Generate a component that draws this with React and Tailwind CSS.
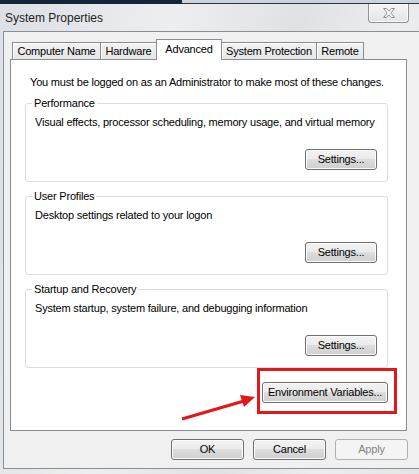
import React from "react";

const btn =
  "h-[21px] rounded-[3px] border border-[#707070] bg-[linear-gradient(#f2f2f2_0%,#ebebeb_50%,#dddddd_50%,#cfcfcf_100%)] shadow-[inset_0_0_0_1px_#fcfcfc] text-black flex items-center justify-center";

function Button({ children, className = "", disabled }) {
  if (disabled)
    return (
      <div className={`h-[21px] rounded-[3px] border border-[#adb2b5] bg-[#f4f4f4] text-[#838383] flex items-center justify-center ${className}`}>
        {children}
      </div>
    );
  return <div className={`${btn} ${className}`}>{children}</div>;
}

function Group({ title, text, mt = "" }) {
  return (
    <fieldset className={`ml-[14px] w-[363px] h-[86px] border border-[#d5dfe5] rounded-[3px] shadow-[inset_1px_1px_0_#fff] ${mt}`}>
      <legend className="ml-[6px] px-[2px] leading-[14px]">{title}</legend>
      <div className="pl-[9px] pt-[5px] leading-[14px]">{text}</div>
      <div className="flex justify-end pr-[10px] pt-[20px]">
        <Button className="w-[72px]">Settings...</Button>
      </div>
    </fieldset>
  );
}

const tabs = [
  { label: "Computer Name", w: "w-[89px]" },
  { label: "Hardware", w: "w-[57px]" },
  { label: "Advanced", w: "w-[66px]", active: true },
  { label: "System Protection", w: "w-[96px]" },
  { label: "Remote", w: "w-[48px]" },
];

export default function App() {
  return (
    <div className="relative w-[419px] h-[474px] overflow-hidden bg-[linear-gradient(100deg,#dcdfe3_0%,#eceef0_35%,#dfe2e5_60%,#ebedef_80%,#e2e4e7_100%)] font-['Liberation_Sans',Arial,sans-serif] text-[11px] tracking-[-0.2px] text-black">
      {/* desktop behind the window */}
      <div className="flex h-[4px]">
        <div className="w-[182px] bg-[#14253a]" />
        <div className="flex-1 bg-[#cdd3da] border-b border-[#2a3440]" />
      </div>

      {/* title bar */}
      <div className="flex h-[27px]">
        <div className="flex-1 pl-[5px] pt-[7px] text-[12px] tracking-normal text-[#1e1e1e] leading-[14px]">System Properties</div>
        <div className="mr-[10px] w-[41px] h-[19px] rounded-b-[4px] border border-t-0 border-[#8d9298] bg-[linear-gradient(#f4f5f6,#e2e5e8)] shadow-[inset_0_0_0_1px_#fafafa] flex items-center justify-center">
          <svg width="12" height="10" viewBox="0 0 12 10">
            <path
              d="M0.5 0.5 H3.5 L6 3.2 L8.5 0.5 H11.5 L7.8 5 L11.5 9.5 H8.5 L6 6.8 L3.5 9.5 H0.5 L4.2 5 Z"
              fill="#fdfdfd"
              stroke="#8c8f93"
              strokeWidth="1"
            />
          </svg>
        </div>
      </div>

      {/* client area */}
      <div className="ml-[3px] w-[430px] h-[438px] bg-[#f0f0f0] border border-[#8a8d92]">
        <div className="pl-[6px] pt-[7px]">
          {/* tabs */}
          <div className="relative z-10 flex items-end h-[20px] pl-[2px]">
            {tabs.map((t, i) =>
              t.active ? (
                <div
                  key={t.label}
                  className={`relative z-10 -ml-px -mb-px ${t.w} h-[21px] border border-b-0 border-[#898c95] bg-white flex justify-center pt-[2px] leading-[14px]`}
                >
                  {t.label}
                </div>
              ) : (
                <div
                  key={t.label}
                  className={`${i ? "-ml-px" : ""} ${t.w} h-[17px] border border-b-0 border-[#898c95] bg-[linear-gradient(#f3f3f3,#e6e6e6)] shadow-[inset_1px_1px_0_#fff] flex items-center justify-center leading-[14px]`}
                >
                  {t.label}
                </div>
              )
            )}
          </div>

          {/* tab panel */}
          <div className="w-[397px] h-[372px] bg-white border border-[#898c95]">
            <div className="pl-[19px] pt-[15px] leading-[14px]">
              You must be logged on as an Administrator to make most of these changes.
            </div>
            <div className="mt-[7px] flex flex-col gap-[7px]">
              <Group title="Performance" text="Visual effects, processor scheduling, memory usage, and virtual memory" />
              <Group title="User Profiles" text="Desktop settings related to your logon" />
              <Group title="Startup and Recovery" text="System startup, system failure, and debugging information" />
            </div>
            <div className="flex justify-end pr-[18px] mt-[14px]">
              <Button className="w-[126px]">Environment Variables...</Button>
            </div>
          </div>

          {/* dialog buttons */}
          <div className="w-[398px] flex justify-end gap-[9px] mt-[8px]">
            <Button className="w-[73px]">OK</Button>
            <Button className="w-[73px]">Cancel</Button>
            <Button className="w-[73px]" disabled>Apply</Button>
          </div>
        </div>
      </div>

      {/* annotation */}
      <div className="absolute left-[257px] top-[368px] w-[140px] h-[46px] border-[3px] border-[#e3161c]" />
      <svg className="absolute left-0 top-0" width="419" height="474" viewBox="0 0 419 474">
        <line x1="182" y1="419" x2="244" y2="401" stroke="#e3161c" strokeWidth="3" />
        <polygon points="255,397 240,395 244,407" fill="#e3161c" />
      </svg>
    </div>
  );
}
